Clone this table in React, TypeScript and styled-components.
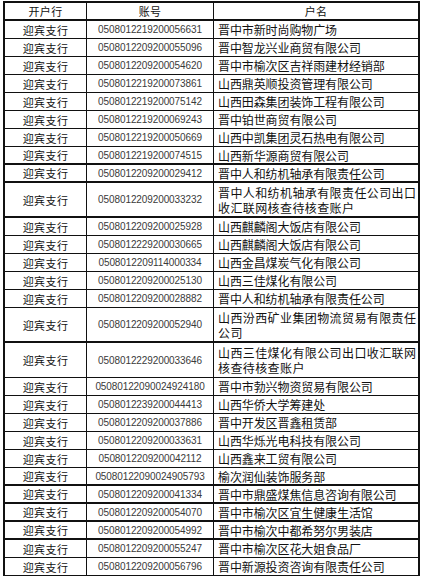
import * as React from 'react';
import styled, { createGlobalStyle } from 'styled-components';

interface Account {
  bank: string;
  no: string;
  name: string[];
  heavy?: boolean;
}

const GlobalStyle = createGlobalStyle`
  html, body {
    margin: 0;
    padding: 0;
    background: #fff;
  }
`;

const Sheet = styled.div`
  margin: 1px 0 0 3px;
  width: 417px;
  border: 2px solid #111;
  border-bottom: none;
  box-sizing: border-box;
  font-family: "Noto Sans CJK SC", "Liberation Sans", sans-serif;
  color: #111;
`;

const Row = styled.div<{ $tall?: boolean; $heavy?: boolean }>`
  display: grid;
  grid-template-columns: 81px 126px 204px;
  column-gap: 1px;
  background: #111;
  height: ${p => (p.$tall ? 35 : 18)}px;
  box-sizing: border-box;
  border-bottom: ${p => (p.$heavy ? 2 : 1)}px solid #111;
`;

const Cell = styled.div`
  background: #fff;
  display: flex;
  align-items: center;
  overflow: hidden;
  white-space: nowrap;
`;

const HeadCell = styled(Cell)`
  justify-content: center;
  font-size: 11px;
  letter-spacing: 0.3px;
`;

const BankCell = styled(Cell)`
  justify-content: center;
  font-size: 11px;
  letter-spacing: 0.4px;
`;

const NumberCell = styled(Cell)<{ $long?: boolean }>`
  justify-content: center;
  font-family: "Liberation Sans", Arial, sans-serif;
  font-size: ${p => (p.$long ? 10 : 11)}px;
  letter-spacing: ${p => (p.$long ? -0.1 : 0.1)}px;
  color: #3a3a3a;
`;

const NameCell = styled(Cell)`
  flex-direction: column;
  align-items: flex-start;
  justify-content: center;
  padding-left: 4px;
  font-size: 12px;
  line-height: 15px;
`;

const NameLine = styled.span<{ $wide?: boolean }>`
  display: block;
  height: 15px;
  line-height: 15px;
  letter-spacing: ${p => (p.$wide ? 0.4 : -0.1)}px;
`;

const accounts: Account[] = [
  { bank: '迎宾支行', no: '050801221920005 6631', name: ['晋中市新时尚购物广场'] },
  { bank: '迎宾支行', no: '050801220920005 5096', name: ['晋中智龙兴业商贸有限公司'] },
  { bank: '迎宾支行', no: '050801220920005 4620', name: ['晋中市榆次区吉祥雨建材经销部'] },
  { bank: '迎宾支行', no: '050801221920007 3861', name: ['山西鼎英顺投资管理有限公司'] },
  { bank: '迎宾支行', no: '050801221920007 5142', name: ['山西田森集团装饰工程有限公司'] },
  { bank: '迎宾支行', no: '050801221920006 9243', name: ['晋中铂世商贸有限公司'] },
  { bank: '迎宾支行', no: '050801221920005 0669', name: ['山西中凯集团灵石热电有限公司'] },
  { bank: '迎宾支行', no: '050801221920007 4515', name: ['山西新华源商贸有限公司'], heavy: true },
  { bank: '迎宾支行', no: '050801220920002 9412', name: ['晋中人和纺机轴承有限责任公司'], heavy: true },
  { bank: '迎宾支行', no: '050801220920003 3232', name: ['晋中人和纺机轴承有限责任公司出口', '收汇联网核查待核查账户'], heavy: true },
  { bank: '迎宾支行', no: '050801220920002 5928', name: ['山西麒麟阁大饭店有限公司'] },
  { bank: '迎宾支行', no: '050801222920003 0665', name: ['山西麒麟阁大饭店有限公司'] },
  { bank: '迎宾支行', no: '050801220911400 0334', name: ['山西金昌煤炭气化有限公司'] },
  { bank: '迎宾支行', no: '050801220920002 5130', name: ['山西三佳煤化有限公司'] },
  { bank: '迎宾支行', no: '050801220920002 8882', name: ['晋中人和纺机轴承有限责任公司'] },
  { bank: '迎宾支行', no: '050801220920005 2940', name: ['山西汾西矿业集团物流贸易有限责任', '公司'], heavy: true },
  { bank: '迎宾支行', no: '050801222920003 3646', name: ['山西三佳煤化有限公司出口收汇联网', '核查待核查账户'] },
  { bank: '迎宾支行', no: '05080122090024924180', name: ['晋中市勃兴物资贸易有限公司'] },
  { bank: '迎宾支行', no: '050801223920004 4413', name: ['山西华侨大学筹建处'] },
  { bank: '迎宾支行', no: '050801220920003 7886', name: ['晋中开发区晋鑫租赁部'] },
  { bank: '迎宾支行', no: '050801220920003 3631', name: ['山西华烁光电科技有限公司'] },
  { bank: '迎宾支行', no: '050801220920004 2112', name: ['山西鑫来工贸有限公司'] },
  { bank: '迎宾支行', no: '05080122090024905793', name: ['榆次润仙装饰服务部'], heavy: true },
  { bank: '迎宾支行', no: '050801220920004 1334', name: ['晋中市鼎盛煤焦信息咨询有限公司'], heavy: true },
  { bank: '迎宾支行', no: '050801220920005 4070', name: ['晋中市榆次区宜生健康生活馆'], heavy: true },
  { bank: '迎宾支行', no: '050801220920005 4992', name: ['晋中市榆次中都希努尔男装店'], heavy: true },
  { bank: '迎宾支行', no: '050801220920005 5247', name: ['晋中市榆次区花大姐食品厂'] },
  { bank: '迎宾支行', no: '050801220920005 6796', name: ['晋中新源投资咨询有限责任公司'] },
];

const App: React.FC = () => {
  return (
    <>
      <GlobalStyle />
      <Sheet>
        <Row $heavy>
          <HeadCell>开户行</HeadCell>
          <HeadCell>账号</HeadCell>
          <HeadCell>户名</HeadCell>
        </Row>
        {accounts.map(account => {
          const no = account.no.replace(/\s/g, '');
          const tall = account.name.length > 1;
          return (
            <Row key={no} $tall={tall} $heavy={account.heavy}>
              <BankCell>{account.bank}</BankCell>
              <NumberCell $long={no.length > 18}>{no}</NumberCell>
              <NameCell>
                {account.name.map(line => (
                  <NameLine key={line} $wide={tall}>{line}</NameLine>
                ))}
              </NameCell>
            </Row>
          );
        })}
      </Sheet>
    </>
  );
};

export default App;
